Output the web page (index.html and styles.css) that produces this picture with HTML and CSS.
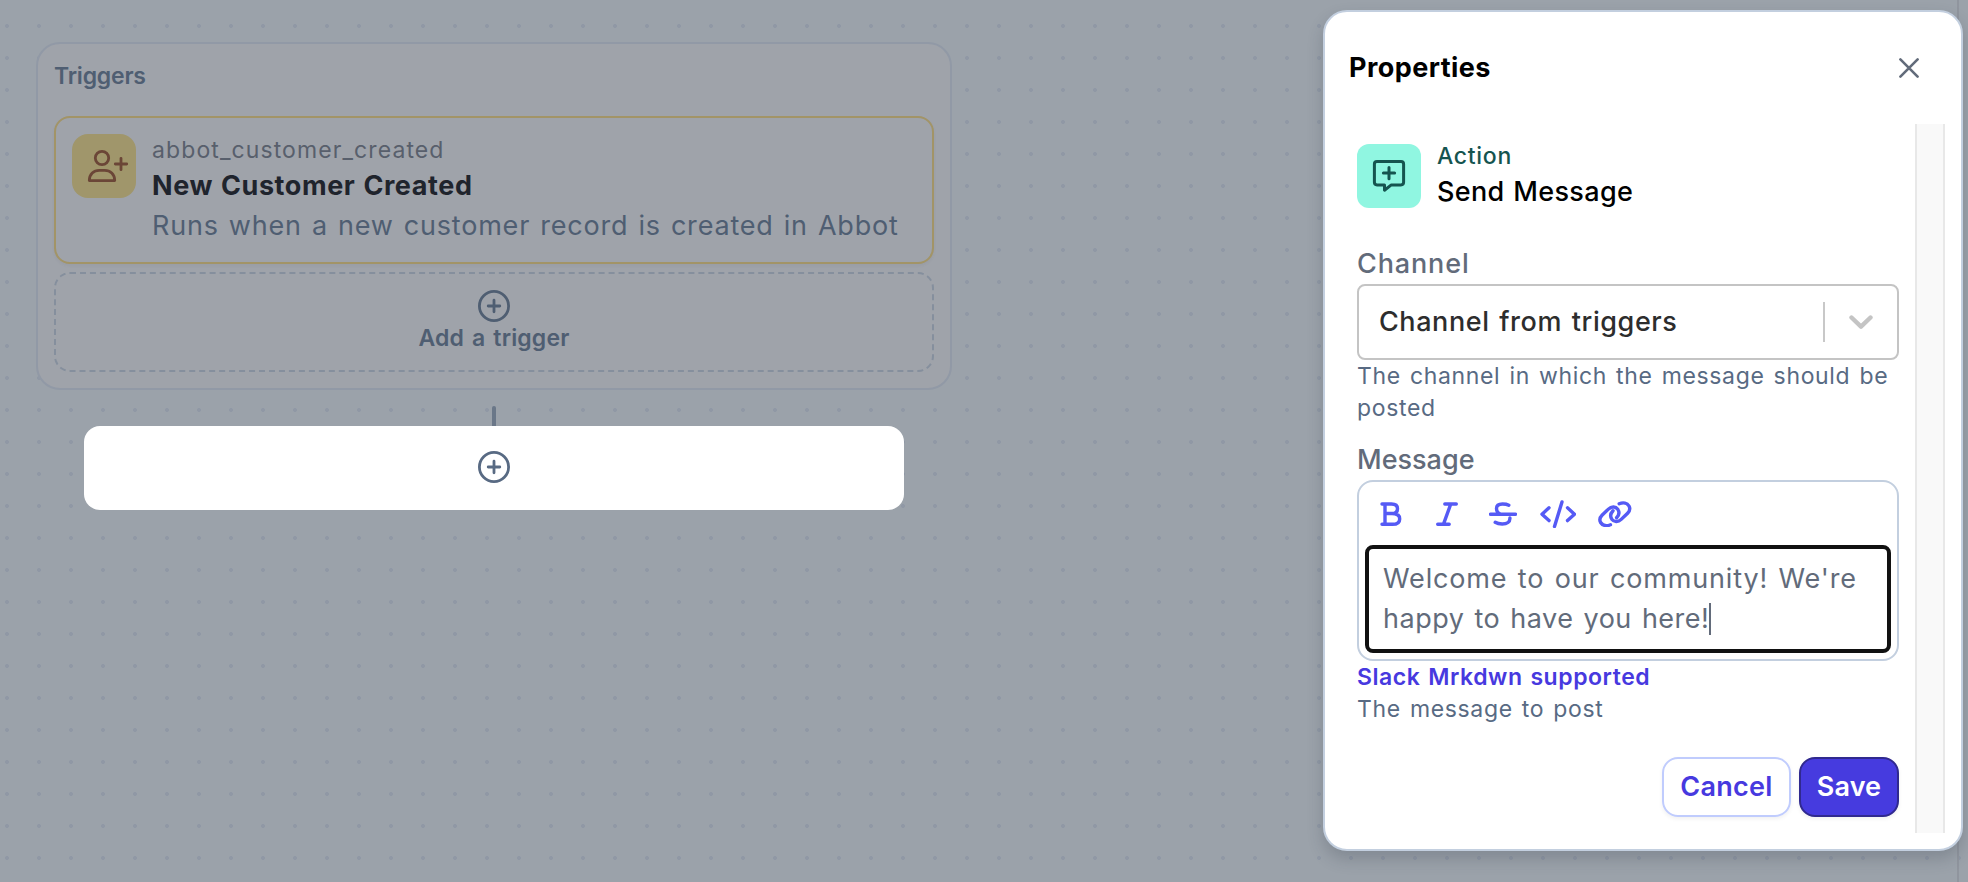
FILE: index.html
```html
<!DOCTYPE html>
<html lang="en">
<head>
<meta charset="utf-8">
<title>Playbook editor</title>
<link rel="stylesheet" href="styles.css">
</head>
<body>
<div class="canvas">
  <main class="flow">
    <section class="triggers">
      <h2 class="triggers-title">Triggers</h2>
      <article class="trigger-card">
        <div class="trigger-icon">
          <svg width="64" height="64" viewBox="0 0 64 64" fill="none" stroke="#6b4637" stroke-width="2.8" stroke-linecap="round" stroke-linejoin="round"><circle cx="30" cy="24" r="6.7"/><path d="M17.3 46.6c0-6.600 4.500-10.300 10-10.300h5.400c5.500 0 10 3.700 10 10.300z"/><path d="M43.300 30h11.400M49 24.300v11.400"/></svg>
        </div>
        <div class="trigger-text">
          <div class="trigger-key">abbot_customer_created</div>
          <div class="trigger-name">New Customer Created</div>
          <div class="trigger-desc">Runs when a new customer record is created in Abbot</div>
        </div>
      </article>
      <button class="add-trigger">
        <svg width="32" height="32" viewBox="0 0 32 32" fill="none" stroke="currentColor" stroke-width="2.8" stroke-linecap="round"><circle cx="16" cy="16" r="14.600"/><path d="M10.200 16h11.600M16 10.200v11.600"/></svg>
        Add a trigger
      </button>
    </section>
    <div class="connector"></div>
    <button class="add-step" aria-label="Add step">
      <svg width="32" height="32" viewBox="0 0 32 32" fill="none" stroke="currentColor" stroke-width="2.800" stroke-linecap="round"><circle cx="16" cy="16" r="14.600"/><path d="M10.200 16h11.600M16 10.200v11.600"/></svg>
    </button>
  </main>
  <aside class="panel">
    <header class="panel-header">
      <h1 class="panel-title">Properties</h1>
      <svg width="20" height="20" viewBox="0 0 20 20" fill="none" stroke="#626b7a" stroke-width="2.600" stroke-linecap="round"><path d="M1.400 1.400l17.200 17.200M18.600 1.400L1.400 18.600"/></svg>
    </header>
    <div class="panel-scroll">
      <form class="panel-form">
        <div class="action">
          <div class="action-icon">
            <svg width="64" height="64" viewBox="0 0 64 64" fill="none" stroke="#15544f" stroke-width="3" stroke-linecap="round" stroke-linejoin="round"><path d="M20 17.400h24q2.600 0 2.600 2.600v18.300q0 2.600-2.600 2.600h-9.700l-6.800 5.300v-5.300H20q-2.600 0-2.600-2.600V20q0-2.600 2.600-2.600z"/><path d="M26.400 29.100h11.200M32 23.500v11.200"/></svg>
          </div>
          <div>
            <div class="action-kind">Action</div>
            <div class="action-name">Send Message</div>
          </div>
        </div>
        <label class="label label-channel">Channel</label>
        <div class="select">
          <span>Channel from triggers</span>
          <i class="select-rule"></i>
          <svg width="24" height="16" viewBox="0 0 24 16" fill="none" stroke="#c4c4c4" stroke-width="4.400" stroke-linecap="round" stroke-linejoin="round"><path d="M2.500 3.500l9.500 9.200 9.500-9.200"/></svg>
        </div>
        <p class="help">The channel in which the message should be<br>posted</p>
        <label class="label label-message">Message</label>
        <div class="editor">
          <div class="toolbar">
            <svg width="22" height="26" viewBox="0 0 22 26"><path d="M2 3h9.500c4 0 6 1.800 6 4.700s-2 4.800-5.500 4.800H5M12 12.500c5 0 7.700 2 7.700 5.400S17 23.300 12.500 23.300H2M5 3v20.300"/></svg>
            <svg width="22" height="26" viewBox="0 0 22 26"><path d="M8.800 3h11.500M1.700 23.300h11.500M14.800 3L7.400 23.300"/></svg>
            <svg width="28" height="26" viewBox="0 0 28 26"><path d="M1.500 13.300h25M19.800 4.200c-1.700-.9-4-1.200-6.300-1.200C9.800 3 7.500 4.700 7.500 7.400c0 2.600 1.400 4.800 4.500 5.900M6.200 21.300c1.900 1.200 4.400 1.700 7 1.700 5 0 8-2 7.700-6"/></svg>
            <svg width="36" height="28" viewBox="0 0 36 28"><path d="M9 7.800l-7 6.400 7 6.400M27.500 7.800l7 6.400-7 6.400M22 2l-7.500 24.500"/></svg>
            <svg width="34" height="26" viewBox="0 0 34 26"><path d="M21.200 2.800c4-1.800 8-.9 9.800 2.200 1.500 2.800.6 5.200-1.400 7.200l-6.400 6.200c-3.200 3-7.300 2.600-9.400-.2-1.800-2.800-1.200-6 1.200-8.500"/><path d="M12.500 23.800c-4 1.700-8 .8-9.900-2.300-1.500-2.800-.6-5.200 1.400-7.200l6.400-6.200c3.200-3 7.300-2.600 9.400.2 1.800 2.800 1.200 6-1.200 8.500"/></svg>
          </div>
          <div class="message">
            <div>Welcome to our community! We're</div>
            <div class="message-line">happy to have you here!<i class="caret"></i></div>
          </div>
        </div>
        <p class="mrkdwn">Slack Mrkdwn supported</p>
        <p class="help">The message to post</p>
        <div class="actions">
          <button type="button" class="btn btn-cancel">Cancel</button>
          <button type="button" class="btn btn-save">Save</button>
        </div>
      </form>
      <div class="track"></div>
    </div>
  </aside>
  <div class="edge"></div>
</div>
</body>
</html>
```

FILE: styles.css
```css
* { box-sizing: border-box; }
body { margin: 0; font-family: Inter, "Work Sans", sans-serif; font-size: 27px; line-height: 40px; white-space: nowrap; }
h1, h2, p { margin: 0; font-size: inherit; font-weight: inherit; }
button { font: inherit; margin: 0; padding: 0; background: none; }
svg { display: block; flex: none; }

.canvas {
  display: flex;
  align-items: flex-start;
  width: 1968px;
  height: 882px;
  overflow: hidden;
  background: radial-gradient(circle at 16px 16px, #9098a5 1.600px, transparent 2.300px) -9px 10px / 32px 32px, #9ba2aa;
}

.flow { display: flex; flex-direction: column; align-items: center; width: 916px; margin: 42px 0 0 36px; color: #4f5e72; }
.triggers { width: 916px; height: 348px; border: 2px solid #9199a6; border-radius: 24px; padding: 16px; background: #9fa3aa; }
.triggers-title { height: 56px; font-size: 23px; line-height: 32px; font-weight: 600; letter-spacing: -.2px; }
.trigger-card { display: flex; gap: 16px; height: 148px; padding: 16px; border: 2px solid #a29467; border-radius: 16px; background: #9fa3aa; box-shadow: 0 2px 3px rgba(60, 70, 80, .06); }
.trigger-icon { width: 64px; height: 64px; border-radius: 16px; background: #a0966b; }
.trigger-key { font-size: 23px; line-height: 32px; letter-spacing: 1.1px; color: #585f6c; }
.trigger-name { font-weight: 700; letter-spacing: .58px; word-spacing: 1px; color: #1f242d; }
.trigger-desc { letter-spacing: .8px; word-spacing: 1.700px; }
.add-trigger { display: flex; flex-direction: column; align-items: center; width: 100%; height: 100px; margin-top: 8px; padding-top: 16px; border: 2px dashed #858f9d; border-radius: 16px; color: #4f5e72; font-size: 23px; line-height: 32px; font-weight: 600; letter-spacing: .15px; word-spacing: 2px; }
.connector { width: 4px; height: 20px; margin-top: 16px; border-radius: 2px 2px 0 0; background: #6a7788; }
.add-step { display: flex; justify-content: center; width: 820px; height: 84px; padding-top: 25px; border: 0; border-radius: 16px; background: #fff; color: #586a83; }

.panel { width: 640px; height: 841px; margin: 10px 0 0 371px; border: 2px solid #c3cfdf; border-radius: 24px; background: #fff; box-shadow: 0 8px 16px rgba(40, 50, 65, .22); position: relative; }
.panel-header { display: flex; justify-content: space-between; align-items: center; height: 112px; padding: 0 42px 1px 24px; }
.panel-title { font-weight: 700; letter-spacing: .45px; color: #000; }
.panel-scroll { display: flex; height: 709px; padding-left: 32px; }
.panel-form { width: 542px; margin-right: 16px; }
.track { width: 30px; border: 2px solid #e8e8e8; border-width: 0 2px; background: #f9f9f9; }
.action { display: flex; gap: 16px; padding-top: 20px; }
.action-icon { width: 64px; height: 64px; border-radius: 12px; background: #90f6e1; }
.action-kind { margin-top: -4px; font-size: 23px; line-height: 32px; font-weight: 500; letter-spacing: .7px; color: #15544f; }
.action-name { font-weight: 500; letter-spacing: .36px; word-spacing: 1px; color: #000; }
.label { display: block; font-weight: 500; color: #626b7a; }
.label-channel { margin-top: 32px; letter-spacing: .86px; }
.label-message { margin-top: 16px; letter-spacing: 0; }
.select { display: flex; align-items: center; height: 76px; padding: 0 24px 0 20px; border: 2px solid #c4c4c4; border-radius: 8px; font-weight: 500; letter-spacing: .57px; word-spacing: 2px; color: #2d2d2d; }
.select-rule { width: 2px; height: 40px; margin: 0 24px 0 auto; background: #c8c8c8; }
.help { font-size: 23px; line-height: 32px; letter-spacing: .65px; word-spacing: 2px; color: #586a83; }
.editor { height: 181px; padding: 6px; border: 2px solid #c3cfdf; border-radius: 16px; }
.toolbar { display: flex; align-items: center; height: 57px; padding: 0 0 5px 15px; fill: none; stroke: #555af5; stroke-width: 3.400; stroke-linecap: round; stroke-linejoin: round; }
.toolbar svg { margin-right: 34px; }
.toolbar svg:nth-child(2) { margin-right: 31px; }
.toolbar svg:nth-child(3) { margin-right: 23px; }
.toolbar svg:nth-child(4) { margin-right: 22px; }
.message { height: 108px; padding: 10px 14px; border: 4px solid #111; border-radius: 8px; letter-spacing: .84px; word-spacing: 2px; color: #626b7a; }
.message-line { display: flex; align-items: center; letter-spacing: .5px; }
.caret { width: 2px; height: 32px; background: #626b7a; }
.mrkdwn { font-size: 23px; line-height: 32px; font-weight: 600; letter-spacing: .55px; word-spacing: 1.500px; color: #4739df; }
.actions { display: flex; justify-content: flex-end; gap: 8px; margin-top: 32px; }
.btn { height: 60px; border: 2px solid #c0ccfd; border-radius: 16px; font-weight: 600; letter-spacing: .3px; color: #4739df; box-shadow: 0 2px 4px rgba(0, 0, 0, .06); }
.btn-cancel { width: 129px; }
.btn-save { width: 100px; letter-spacing: .1px; color: #fff; background: #463bdf; border-color: #30298f; }
.edge { width: 2px; height: 882px; margin-left: -6px; background: #90959e; }
```
